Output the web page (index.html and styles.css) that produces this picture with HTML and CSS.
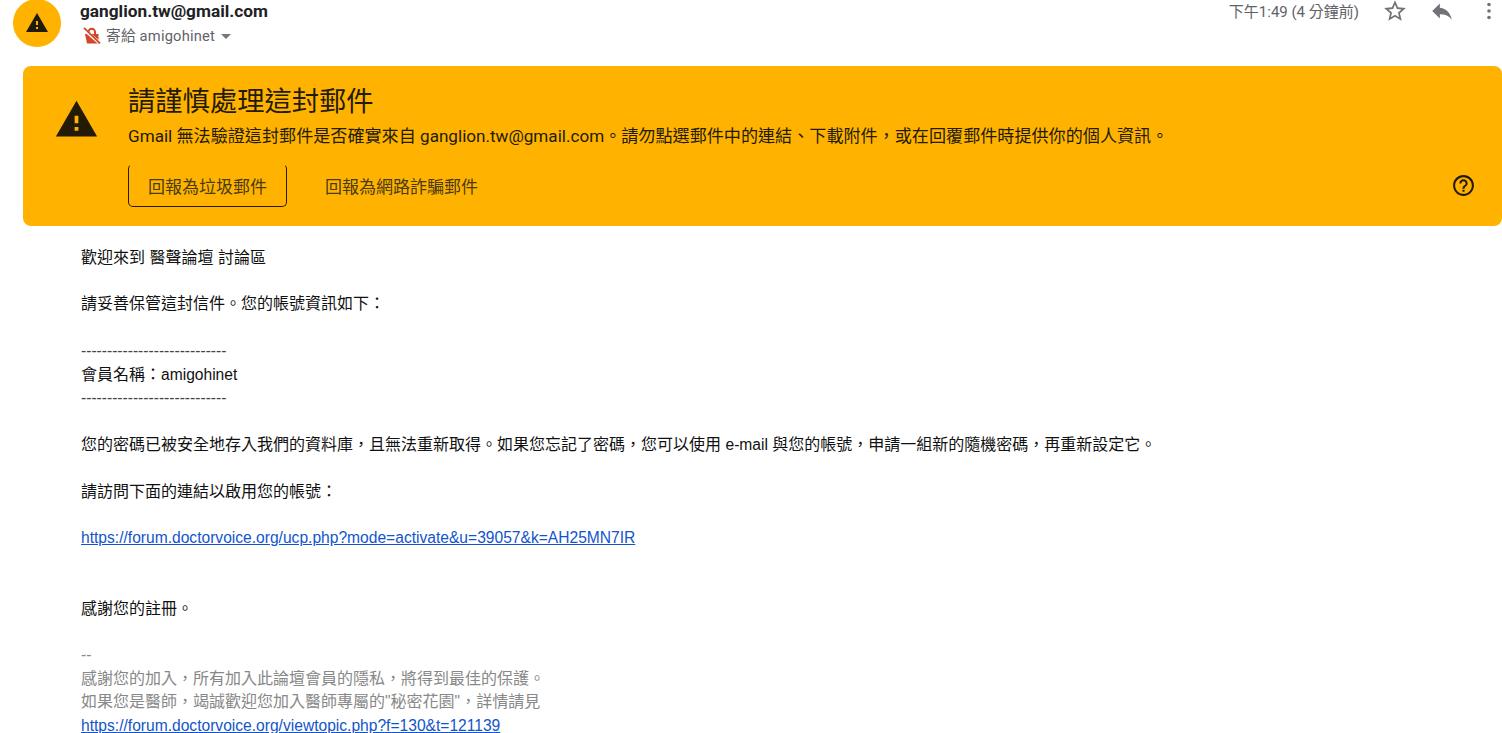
FILE: index.html
```html
<!DOCTYPE html>
<html lang="zh-Hant">
<head>
<meta charset="utf-8">
<title>請謹慎處理這封郵件</title>
<link rel="stylesheet" href="styles.css">
</head>
<body>
<header class="head">
  <div class="avatar">
    <svg viewBox="0 0 24 24" width="24" height="24"><path fill="#1f1a0a" d="M1 21h22L12 2 1 21zm12-3h-2v-2h2v2zm0-4h-2v-4h2v4z"/></svg>
  </div>
  <div class="who">
    <div class="sender">ganglion.tw@gmail.com</div>
    <div class="to">
      <svg class="lock" viewBox="0 0 18 18" width="18" height="18"><path fill="#d4462a" d="M2 7h13.500v9.500H4z"/><path fill="none" stroke="#d4462a" stroke-width="2" d="M5.500 7V5a3.200 3.200 0 0 1 6.500 0v2"/><path stroke="#fff" stroke-width="3.200" d="M1 2.500l15 13"/><path stroke="#d4462a" stroke-width="1.800" d="M1 .8l16 15.500"/></svg>
      <span>寄給 amigohinet</span>
      <span class="caret"></span>
    </div>
  </div>
  <div class="meta">
    <span class="time">下午1:49 (4 分鐘前)</span>
    <svg class="star" viewBox="0 0 24 24" width="26" height="26"><path fill="#6f7276" d="M22 9.240l-7.190-.62L12 2 9.190 8.630 2 9.240l5.460 4.730L5.820 21 12 17.270 18.180 21l-1.630-7.030L22 9.240zM12 15.400l-3.760 2.270 1-4.280-3.320-2.880 4.380-.38L12 6.100l1.710 4.040 4.380.38-3.320 2.880 1 4.280L12 15.400z"/></svg>
    <svg class="reply" viewBox="0 0 24 24" width="26" height="26"><path fill="#6f7276" d="M10 9V5l-7 7 7 7v-4.100c5 0 8.500 1.600 11 5.100-1-5-4-10-11-11z"/></svg>
    <svg class="more" viewBox="0 0 6 20" width="6" height="20"><circle cx="3" cy="3.500" r="1.800" fill="#6f7276"/><circle cx="3" cy="10" r="1.800" fill="#6f7276"/><circle cx="3" cy="16.500" r="1.800" fill="#6f7276"/></svg>
  </div>
</header>

<section class="warn">
  <svg class="warn-icon" viewBox="0 0 24 24" width="45" height="45"><path fill="#231b05" d="M1 21h22L12 2 1 21zm12-3h-2v-2h2v2zm0-4h-2v-4h2v4z"/></svg>
  <div class="warn-body">
    <h2 class="warn-title">請謹慎處理這封郵件</h2>
    <p class="warn-text">Gmail 無法驗證這封郵件是否確實來自 ganglion.tw@gmail.com。請勿點選郵件中的連結、下載附件，或在回覆郵件時提供你的個人資訊。</p>
    <div class="warn-actions">
      <button class="btn btn-outline">回報為垃圾郵件</button>
      <button class="btn">回報為網路詐騙郵件</button>
      <svg class="help" viewBox="0 0 24 24" width="25" height="25"><path fill="#231b05" d="M11 18h2v-2h-2v2zm1-16C6.480 2 2 6.480 2 12s4.480 10 10 10 10-4.480 10-10S17.520 2 12 2zm0 18c-4.410 0-8-3.590-8-8s3.590-8 8-8 8 3.590 8 8-3.590 8-8 8zm0-14c-2.210 0-4 1.790-4 4h2c0-1.100.9-2 2-2s2 .9 2 2c0 2-3 1.750-3 5h2c0-2.250 3-2.500 3-5 0-2.210-1.790-4-4-4z"/></svg>
    </div>
  </div>
</section>

<main class="mail">
  <p>歡迎來到 醫聲論壇 討論區</p>
  <p class="gap">請妥善保管這封信件。您的帳號資訊如下：</p>
  <p class="gap lat dashes">----------------------------</p>
  <p>會員名稱：<span class="lat">amigohinet</span></p>
  <p class="lat dashes">----------------------------</p>
  <p class="gap">您的密碼已被安全地存入我們的資料庫，且無法重新取得。如果您忘記了密碼，您可以使用 <span class="lat">e-mail</span> 與您的帳號，申請一組新的隨機密碼，再重新設定它。</p>
  <p class="gap">請訪問下面的連結以啟用您的帳號：</p>
  <p class="gap lat"><a href="#">https://forum.doctorvoice.org/ucp.php?mode=activate&amp;u=39057&amp;k=AH25MN7IR</a></p>
  <p class="gap3">感謝您的註冊。</p>
  <div class="sig">
    <p class="gap lat">--</p>
    <p>感謝您的加入，所有加入此論壇會員的隱私，將得到最佳的保護。</p>
    <p>如果您是醫師，竭誠歡迎您加入醫師專屬的<span class="lat">"</span>秘密花園<span class="lat">"</span>，詳情請見</p>
    <p class="lat"><a href="#">https://forum.doctorvoice.org/viewtopic.php?f=130&amp;t=121139</a></p>
  </div>
</main>
</body>
</html>
```

FILE: styles.css
```css
html, body { margin: 0; height: 733px; overflow: hidden; background: #fff; }
body { font-family: Roboto, "Noto Sans CJK TC", sans-serif; color: #202124; }

.head { display: flex; height: 66px; padding-left: 13px; align-items: flex-start; }
.avatar { width: 48px; height: 48px; margin-top: -1px; border-radius: 50%; background: #ffb300; display: flex; align-items: center; justify-content: center; flex: none; }
.who { margin-left: 19px; }
.sender { font-size: 17.250px; font-weight: 700; line-height: 22px; color: #202124; }
.to { display: flex; align-items: center; font-size: 14.700px; line-height: 20px; color: #5f6368; margin-top: 4px; letter-spacing: .2px; }
.lock { margin: 0 5px 0 3px; }
.caret { margin-left: 6px; margin-top: 1px; border: 5.500px solid transparent; border-top-color: #777; border-bottom: 0; }
.meta { margin-left: auto; display: flex; align-items: center; height: 22px; color: #5f6368; font-size: 15px; padding-right: 10px; }
.time { margin: -1px 23px 0 0; }
.star { margin-right: 21px; }
.reply { margin-right: 31px; }

.warn { margin-left: 23px; height: 160px; box-sizing: border-box; background: #ffb300; border-radius: 8px; display: flex; color: #231b05; }
.warn-icon { margin: 31px 0 0 31px; flex: none; }
.warn-body { margin-left: 29px; flex: 1; padding-top: 19px; }
.warn-title { margin: 0; font-size: 27.300px; font-weight: 400; line-height: 34px; }
.warn-text { margin: 5px 0 0; font-size: 17.100px; line-height: 24px; white-space: nowrap; }
.warn-actions { display: flex; align-items: center; margin-top: 16px; padding-right: 26px; }
.btn { font: inherit; font-size: 17px; color: #4a3b10; background: none; border: 0; height: 43px; padding: 0 19px; }
.btn-outline { border: 1px solid #231b05; border-top-color: transparent; border-radius: 5px; margin-right: 19px; }
.help { margin-left: auto; }

.mail { padding: 19.500px 0 0 81px; font-family: "Liberation Sans", "Noto Sans CJK TC", sans-serif; font-size: 16px; line-height: 23.400px; color: #111; }
.mail p { margin: 0; line-height: 23.400px; }
.mail .lat { font-size: 15.600px; }
.mail .gap { margin-top: 23.400px; }
.mail .gap3 { margin-top: 46.800px; }
.dashes { color: #444; }
.mail a { color: #1155cc; }
.sig { color: #888; }
```
